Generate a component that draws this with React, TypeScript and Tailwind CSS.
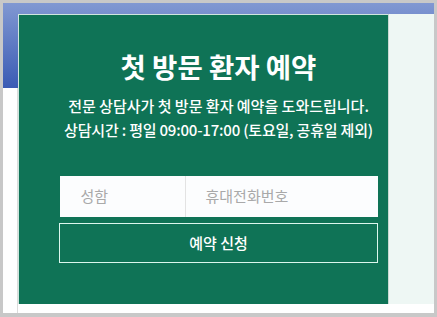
import React from 'react';

const font = { fontFamily: '"Noto Sans CJK KR", "Noto Sans", sans-serif' };

const App: React.FC = () => {
    return (
        <div className="w-[437px] h-[317px] bg-[#c8c8c8] pt-[3px] pl-[3px] pr-[3px] pb-[4px]" style={font}>
            <div className="h-full flex flex-col bg-white">
                {/* top area with blue band behind */}
                <div className="h-[301px] flex bg-[linear-gradient(to_bottom,#8198d2,#3a5bb4_85px,#ffffff_85px)]">
                    <div className="w-[15px] flex flex-col">
                        <div className="flex-1 mt-[85px] border-r border-[#dcdcdc]" />
                    </div>
                    {/* reservation panel */}
                    <div className="w-[370px] mt-[11px] bg-[#0f7356] border-t border-l border-[#cfe6de] pl-[30px] flex flex-col items-center">
                        <h1 className="mt-[35px] text-[27.5px] leading-[33px] font-bold text-white">
                            첫 방문 환자 예약
                        </h1>
                        <div className="mt-[11px] flex flex-col items-center text-[15px] leading-[24px] font-medium text-white">
                            <p>전문 상담사가 첫 방문 환자 예약을 도와드립니다.</p>
                            <p className="tracking-[-0.2px]">상담시간 : 평일 09:00-17:00 (토요일, 공휴일 제외)</p>
                        </div>
                        <div className="mt-[34px] w-[318px] h-[41px] flex bg-[#fcfdfe] text-[15px] text-[#a9a9a9]">
                            <div className="w-[126px] border-r border-[#e3e3e3] flex items-center pl-[21px]">성함</div>
                            <div className="flex-1 flex items-center pl-[20px]">휴대전화번호</div>
                        </div>
                        <button className="mt-[6px] w-[319px] h-[40px] border border-[#dcf7ee] text-white text-[15px] font-medium flex items-center justify-center">
                            예약 신청
                        </button>
                    </div>
                    <div className="flex-1 mt-[11px] bg-[#eef7f4] border-l border-[#c9d9d3]" />
                </div>
                <div className="flex-1 flex">
                    <div className="w-[15px] border-r border-[#dcdcdc]" />
                </div>
            </div>
        </div>
    );
};

export default App;
